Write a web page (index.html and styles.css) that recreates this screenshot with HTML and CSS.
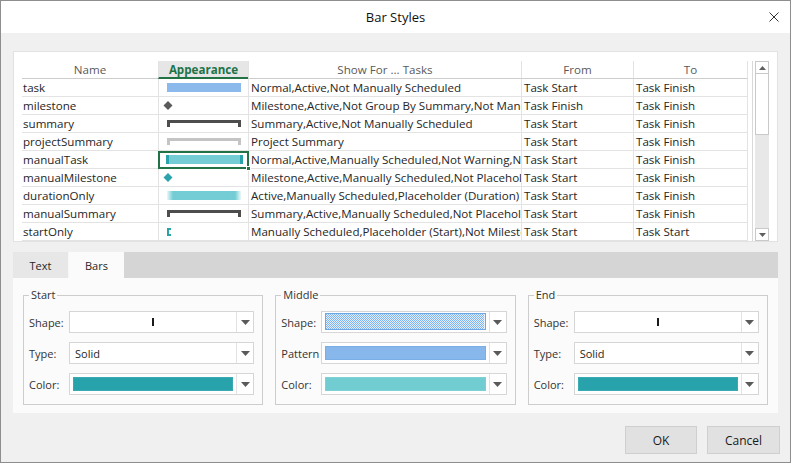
FILE: index.html
```html
<!DOCTYPE html>
<html>
<head>
<meta charset="utf-8">
<title>Bar Styles</title>
<link rel="stylesheet" href="styles.css">
</head>
<body>
<div class="dialog">
  <div class="titlebar">
    <div class="title">Bar Styles</div>
    <svg class="close" width="10" height="10" viewBox="0 0 10 10"><path d="M0.5 0.5L9.5 9.5M9.5 0.5L0.5 9.5" stroke="#333" stroke-width="1" fill="none"/></svg>
  </div>
  <div class="main">
    <div class="grid-box">
      <div class="table">
        <div class="row head">
          <div class="cell">Name</div>
          <div class="cell active">Appearance</div>
          <div class="cell">Show For ... Tasks</div>
          <div class="cell">From</div>
          <div class="cell">To</div>
        </div>
        <div class="row">
          <div class="cell name">task</div>
          <div class="cell app"><svg width="89" height="17"><rect x="8" y="4" width="74" height="9" fill="#8bb9ec"/></svg></div>
          <div class="cell">Normal,Active,Not Manually Scheduled</div>
          <div class="cell">Task Start</div>
          <div class="cell">Task Finish</div>
        </div>
        <div class="row">
          <div class="cell name">milestone</div>
          <div class="cell app"><svg width="89" height="17"><polygon points="9,4 13.5,8.5 9,13 4.5,8.5" fill="#5a5a5a"/></svg></div>
          <div class="cell">Milestone,Active,Not Group By Summary,Not Manually Scheduled</div>
          <div class="cell">Task Finish</div>
          <div class="cell">Task Finish</div>
        </div>
        <div class="row">
          <div class="cell name">summary</div>
          <div class="cell app"><svg width="89" height="17"><path d="M8 5H82V12H79V8H11V12H8Z" fill="#4d4d4d"/></svg></div>
          <div class="cell">Summary,Active,Not Manually Scheduled</div>
          <div class="cell">Task Start</div>
          <div class="cell">Task Finish</div>
        </div>
        <div class="row">
          <div class="cell name">projectSummary</div>
          <div class="cell app"><svg width="89" height="17"><path d="M8 5H82V12H79V8H11V12H8Z" fill="#c4c4c4"/></svg></div>
          <div class="cell">Project Summary</div>
          <div class="cell">Task Start</div>
          <div class="cell">Task Finish</div>
        </div>
        <div class="row">
          <div class="cell name">manualTask</div>
          <div class="cell app selected"><svg width="89" height="17"><rect x="7" y="4" width="77" height="9" fill="#74cdd4"/><rect x="7" y="4" width="3" height="9" fill="#2aa3ab"/><rect x="81" y="4" width="3" height="9" fill="#2aa3ab"/></svg><span class="sel-frame"></span><span class="sel-handle"></span></div>
          <div class="cell">Normal,Active,Manually Scheduled,Not Warning,Not Placeholder</div>
          <div class="cell">Task Start</div>
          <div class="cell">Task Finish</div>
        </div>
        <div class="row">
          <div class="cell name">manualMilestone</div>
          <div class="cell app"><svg width="89" height="17"><polygon points="9,4 13.5,8.5 9,13 4.5,8.5" fill="#2aa3ab"/></svg></div>
          <div class="cell">Milestone,Active,Manually Scheduled,Not Placeholder</div>
          <div class="cell">Task Start</div>
          <div class="cell">Task Finish</div>
        </div>
        <div class="row">
          <div class="cell name">durationOnly</div>
          <div class="cell app"><svg width="89" height="17"><defs><linearGradient id="fade" x1="0" x2="1" y1="0" y2="0"><stop offset="0" stop-color="#74cdd4" stop-opacity="0.15"/><stop offset="0.08" stop-color="#74cdd4" stop-opacity="1"/><stop offset="0.92" stop-color="#74cdd4" stop-opacity="1"/><stop offset="1" stop-color="#74cdd4" stop-opacity="0.15"/></linearGradient></defs><rect x="8" y="4" width="74" height="9" fill="url(#fade)"/></svg></div>
          <div class="cell">Active,Manually Scheduled,Placeholder (Duration)</div>
          <div class="cell">Task Start</div>
          <div class="cell">Task Finish</div>
        </div>
        <div class="row">
          <div class="cell name">manualSummary</div>
          <div class="cell app"><svg width="89" height="17"><path d="M8 5H82V12H79V8H11V12H8Z" fill="#4d4d4d"/></svg></div>
          <div class="cell">Summary,Active,Manually Scheduled,Not Placeholder</div>
          <div class="cell">Task Start</div>
          <div class="cell">Task Finish</div>
        </div>
        <div class="row">
          <div class="cell name">startOnly</div>
          <div class="cell app"><svg width="89" height="17"><path d="M8 5H12V7H10V11H12V13H8Z" fill="#2aa3ab"/></svg></div>
          <div class="cell">Manually Scheduled,Placeholder (Start),Not Milestone</div>
          <div class="cell">Task Start</div>
          <div class="cell">Task Start</div>
        </div>
      </div>
      <div class="scrollbar">
        <div class="sb-btn"><svg width="7" height="4" viewBox="0 0 7 4"><polygon points="0,4 7,4 3.5,0" fill="#606060"/></svg></div>
        <div class="sb-thumb"></div>
        <div class="sb-track"></div>
        <div class="sb-btn"><svg width="7" height="4" viewBox="0 0 7 4"><polygon points="0,0 7,0 3.5,4" fill="#606060"/></svg></div>
      </div>
    </div>

    <div class="tabs">
      <div class="tab">Text</div>
      <div class="tab current">Bars</div>
    </div>
    <div class="panel">
      <fieldset class="group">
        <legend>Start</legend>
        <div class="fields">
          <span class="label">Shape:</span>
          <div class="combo"><div class="combo-main center"><span class="tick"></span></div><div class="combo-btn"><svg width="9" height="5" viewBox="0 0 9 5"><polygon points="0,0 9,0 4.5,5" fill="#5a5a5a"/></svg></div></div>
          <span class="label">Type:</span>
          <div class="combo"><div class="combo-main text">Solid</div><div class="combo-btn"><svg width="9" height="5" viewBox="0 0 9 5"><polygon points="0,0 9,0 4.5,5" fill="#5a5a5a"/></svg></div></div>
          <span class="label">Color:</span>
          <div class="combo"><div class="combo-main swatch-wrap"><span class="swatch teal-dark"></span></div><div class="combo-btn"><svg width="9" height="5" viewBox="0 0 9 5"><polygon points="0,0 9,0 4.5,5" fill="#5a5a5a"/></svg></div></div>
        </div>
      </fieldset>
      <fieldset class="group">
        <legend>Middle</legend>
        <div class="fields">
          <span class="label">Shape:</span>
          <div class="combo"><div class="combo-main swatch-wrap tall"><span class="swatch dotted"><svg class="dots" width="100%" height="100%"><defs><pattern id="dotpat" width="2" height="2" patternUnits="userSpaceOnUse"><rect width="2" height="2" fill="#e4f0fd"/><rect x="0" y="0" width="1" height="1" fill="#7fb4ee"/><rect x="1" y="1" width="1" height="1" fill="#7fb4ee"/></pattern></defs><rect width="100%" height="100%" fill="url(#dotpat)"/></svg></span></div><div class="combo-btn"><svg width="9" height="5" viewBox="0 0 9 5"><polygon points="0,0 9,0 4.5,5" fill="#5a5a5a"/></svg></div></div>
          <span class="label">Pattern</span>
          <div class="combo"><div class="combo-main swatch-wrap"><span class="swatch blue"></span></div><div class="combo-btn"><svg width="9" height="5" viewBox="0 0 9 5"><polygon points="0,0 9,0 4.5,5" fill="#5a5a5a"/></svg></div></div>
          <span class="label">Color:</span>
          <div class="combo"><div class="combo-main swatch-wrap"><span class="swatch teal-light"></span></div><div class="combo-btn"><svg width="9" height="5" viewBox="0 0 9 5"><polygon points="0,0 9,0 4.5,5" fill="#5a5a5a"/></svg></div></div>
        </div>
      </fieldset>
      <fieldset class="group">
        <legend>End</legend>
        <div class="fields">
          <span class="label">Shape:</span>
          <div class="combo"><div class="combo-main center"><span class="tick"></span></div><div class="combo-btn"><svg width="9" height="5" viewBox="0 0 9 5"><polygon points="0,0 9,0 4.5,5" fill="#5a5a5a"/></svg></div></div>
          <span class="label">Type:</span>
          <div class="combo"><div class="combo-main text">Solid</div><div class="combo-btn"><svg width="9" height="5" viewBox="0 0 9 5"><polygon points="0,0 9,0 4.5,5" fill="#5a5a5a"/></svg></div></div>
          <span class="label">Color:</span>
          <div class="combo"><div class="combo-main swatch-wrap"><span class="swatch teal-dark"></span></div><div class="combo-btn"><svg width="9" height="5" viewBox="0 0 9 5"><polygon points="0,0 9,0 4.5,5" fill="#5a5a5a"/></svg></div></div>
        </div>
      </fieldset>
    </div>

    <div class="footer">
      <button class="btn ok">OK</button>
      <button class="btn cancel">Cancel</button>
    </div>
  </div>
</div>
</body>
</html>
```

FILE: styles.css
```css
* { box-sizing: border-box; }
html, body { margin: 0; padding: 0; }
body {
  font-family: "Open Sans", "Noto Sans", "Liberation Sans", sans-serif;
  font-size: 11px;
  color: #262626;
  background: #ffffff;
}
.dialog {
  width: 791px;
  height: 463px;
  border: 1px solid #8e8e8e;
  background: #f0f0f0;
  display: flex;
  flex-direction: column;
}
.titlebar {
  height: 32px;
  background: #ffffff;
  display: grid;
  grid-template-columns: 1fr auto 1fr;
  align-items: center;
  flex: none;
}
.title {
  grid-column: 2;
  font-size: 13px;
  color: #111111;
}
.close {
  grid-column: 3;
  justify-self: end;
  margin-right: 11px;
}
.main {
  flex: 1;
  display: flex;
  flex-direction: column;
  padding: 18px 12px 0 12px;
}
.grid-box {
  height: 191px;
  flex: none;
  background: #ffffff;
  border: 1px solid #e2e2e2;
  padding: 9px 8px 0 8px;
  display: flex;
  gap: 4px;
  overflow: hidden;
}
.table {
  width: 726px;
  flex: none;
  font-size: 11.6px;
}
.row {
  display: grid;
  grid-template-columns: 136px 90px 273px 112px 115px;
  height: 18px;
}
.cell {
  height: 18px;
  line-height: 17px;
  white-space: nowrap;
  overflow: hidden;
  padding-left: 2px;
  border-bottom: 1px solid #e3e3e3;
  border-left: 1px solid #e3e3e3;
}
.cell:first-child {
  border-left: none;
  padding-left: 1px;
}
.cell:last-child {
  border-right: 1px solid #e3e3e3;
}
.head .cell {
  text-align: center;
  color: #5a5a5a;
  border-bottom-color: #cdcdcd;
  padding-left: 0;
}
.head .cell.active {
  background: #e6e6e6;
  color: #217346;
  font-weight: 700;
  border-bottom: 2px solid #217346;
}
.cell.app {
  padding-left: 0;
  position: relative;
}
.cell.app svg {
  display: block;
}
.cell.selected {
  overflow: visible;
}
.sel-frame {
  position: absolute;
  left: -1px;
  right: -1px;
  top: 0;
  bottom: -1px;
  border: 2px solid #217346;
  z-index: 2;
}
.sel-handle {
  position: absolute;
  right: -3px;
  bottom: -3px;
  width: 5px;
  height: 5px;
  background: #217346;
  border: 1px solid #ffffff;
  z-index: 3;
}
.scrollbar {
  width: 17px;
  height: 180px;
  flex: none;
  border-left: 1px solid #d9d9d9;
  padding-left: 2px;
  display: flex;
  flex-direction: column;
}
.sb-btn {
  height: 13px;
  flex: none;
  border: 1px solid #c9c9c9;
  background: #ffffff;
  display: flex;
  align-items: center;
  justify-content: center;
}
.sb-thumb {
  height: 62px;
  flex: none;
  margin-top: -1px;
  border: 1px solid #c9c9c9;
  background: #ffffff;
}
.sb-track {
  flex: 1;
  background: #e8e8e8;
}
.tabs {
  margin-top: 10px;
  height: 26px;
  flex: none;
  background: #d5d5d5;
  display: flex;
}
.tab {
  width: 56px;
  display: flex;
  align-items: center;
  justify-content: center;
  background: #e7e7e7;
  color: #262626;
  border-right: 1px solid #f6f6f6;
}
.tab.current {
  width: 55px;
  background: #fbfbfb;
  border-right: none;
}
.panel {
  height: 135px;
  flex: none;
  background: #fbfbfb;
  padding: 10px 10px 9px 10px;
  display: grid;
  grid-template-columns: 1fr 1fr 1fr;
  column-gap: 12px;
}
.group {
  margin: 0;
  min-width: 0;
  border: 1px solid #cdcdcd;
  padding: 9px 8px 9px 5px;
}
.group legend {
  padding: 0 2px;
  line-height: 14px;
  color: #333333;
}
.fields {
  display: grid;
  grid-template-columns: 40px 1fr;
  grid-auto-rows: 22px;
  row-gap: 9px;
  align-items: center;
}
.label {
  color: #333333;
}
.combo {
  height: 22px;
  border: 1px solid #d6d6d6;
  background: #ffffff;
  display: flex;
}
.combo-main {
  flex: 1;
  min-width: 0;
  display: flex;
  align-items: center;
}
.combo-main.center {
  justify-content: center;
}
.combo-main.text {
  padding-left: 5px;
  color: #262626;
}
.combo-main.swatch-wrap {
  padding: 3px;
  align-items: stretch;
}
.combo-main.swatch-wrap.tall {
  padding: 1px 3px 2px 3px;
}
.combo-btn {
  width: 17px;
  flex: none;
  border-left: 1px solid #e3e3e3;
  display: flex;
  align-items: center;
  justify-content: center;
}
.tick {
  width: 2px;
  height: 8px;
  background: #1a1a1a;
}
.swatch {
  flex: 1;
  display: block;
}
.swatch.teal-dark { background: #29a3ab; border: 1px solid #3aaab2; }
.swatch.teal-light { background: #72cdd3; border: 1px solid #80d1d6; }
.swatch.blue { background: #87b7eb; border: 1px solid #7aaee6; }
.swatch.dotted {
  border: 1px solid #6fa7e6;
  overflow: hidden;
}
.dots {
  display: block;
}
.footer {
  margin-top: 13px;
  display: flex;
  justify-content: flex-end;
  gap: 10px;
  margin-right: -2px;
}
.btn {
  height: 28px;
  width: 72px;
  font-family: inherit;
  font-size: 12px;
  color: #1a1a1a;
  background: #e1e1e1;
  border: 1px solid #cfcfcf;
  padding: 0;
}
.btn.cancel {
  width: 73px;
}
```
